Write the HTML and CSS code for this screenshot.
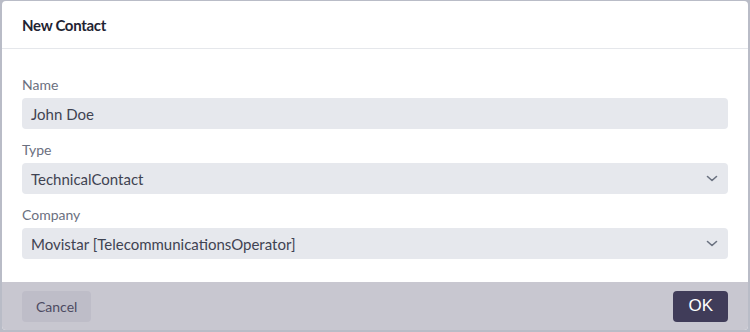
FILE: index.html
```html
<!DOCTYPE html>
<html lang="en">
<head>
  <meta charset="UTF-8" />
  <title>New Contact</title>
  <link rel="stylesheet" href="styles.css">
</head>
<body>
  <div class="dialog">
    <div class="dialog-header">
      <h2 class="dialog-title">New Contact</h2>
    </div>

    <div class="dialog-body">
      <div class="field">
        <label class="field-label">Name</label>
        <div class="input">John Doe</div>
      </div>
      <div class="field">
        <label class="field-label">Type</label>
        <div class="input select">
          <span>TechnicalContact</span>
          <svg class="chevron" width="12" height="8" viewBox="0 0 12 8"><path d="M1.5 1.5 L6 5.5 L10.5 1.5" fill="none" stroke="#6b7280" stroke-width="1.6" stroke-linecap="round" stroke-linejoin="round"/></svg>
        </div>
      </div>
      <div class="field">
        <label class="field-label">Company</label>
        <div class="input select">
          <span>Movistar [TelecommunicationsOperator]</span>
          <svg class="chevron" width="12" height="8" viewBox="0 0 12 8"><path d="M1.5 1.5 L6 5.5 L10.5 1.5" fill="none" stroke="#6b7280" stroke-width="1.6" stroke-linecap="round" stroke-linejoin="round"/></svg>
        </div>
      </div>
    </div>

    <div class="dialog-footer">
      <button class="btn btn-cancel">Cancel</button>
      <button class="btn btn-ok">OK</button>
    </div>
  </div>
</body>
</html>
```

FILE: styles.css
```css
html, body {
  margin: 0;
  padding: 0;
  height: 100%;
}

body {
  background: #b9bcc7;
  font-family: Lato, "Noto Sans", sans-serif;
  padding: 1px 2px 2px 2px;
  box-sizing: border-box;
}

.dialog {
  background: #fff;
  border-radius: 4px;
  overflow: hidden;
  height: 100%;
  display: flex;
  flex-direction: column;
}

.dialog-header {
  height: 47px;
  border-bottom: 1px solid #e5e7eb;
  display: flex;
  align-items: center;
  padding: 0 20px;
}

.dialog-title {
  margin: 0;
  font-size: 15px;
  font-weight: 700;
  color: #1f2433;
  letter-spacing: -0.3px;
}

.dialog-body {
  flex: 1;
  padding: 28px 20px 0 20px;
}

.field {
  margin-bottom: 13px;
}

.field-label {
  display: block;
  font-size: 14px;
  color: #6b7080;
  margin-bottom: 5px;
  line-height: 16px;
}

.input {
  background: #e6e8ed;
  border-radius: 4px;
  height: 31px;
  padding: 0 9px;
  display: flex;
  align-items: center;
  font-size: 15px;
  color: #3f4352;
}

.select {
  justify-content: space-between;
}

.chevron {
  margin-right: 1px;
}

.dialog-footer {
  height: 48px;
  background: #c8c7d0;
  display: flex;
  justify-content: space-between;
  align-items: center;
  padding: 0 20px;
}

.btn {
  border: none;
  border-radius: 4px;
  height: 31px;
  font-family: inherit;
  cursor: pointer;
}

.btn-cancel {
  background: #bebdc8;
  color: #4d4b62;
  font-size: 14px;
  padding: 0 14px;
}

.btn-ok {
  background: #403c59;
  color: #fff;
  font-family: "Liberation Sans", Arial, sans-serif;
  font-size: 17px;
  padding: 0 15px;
}
```
